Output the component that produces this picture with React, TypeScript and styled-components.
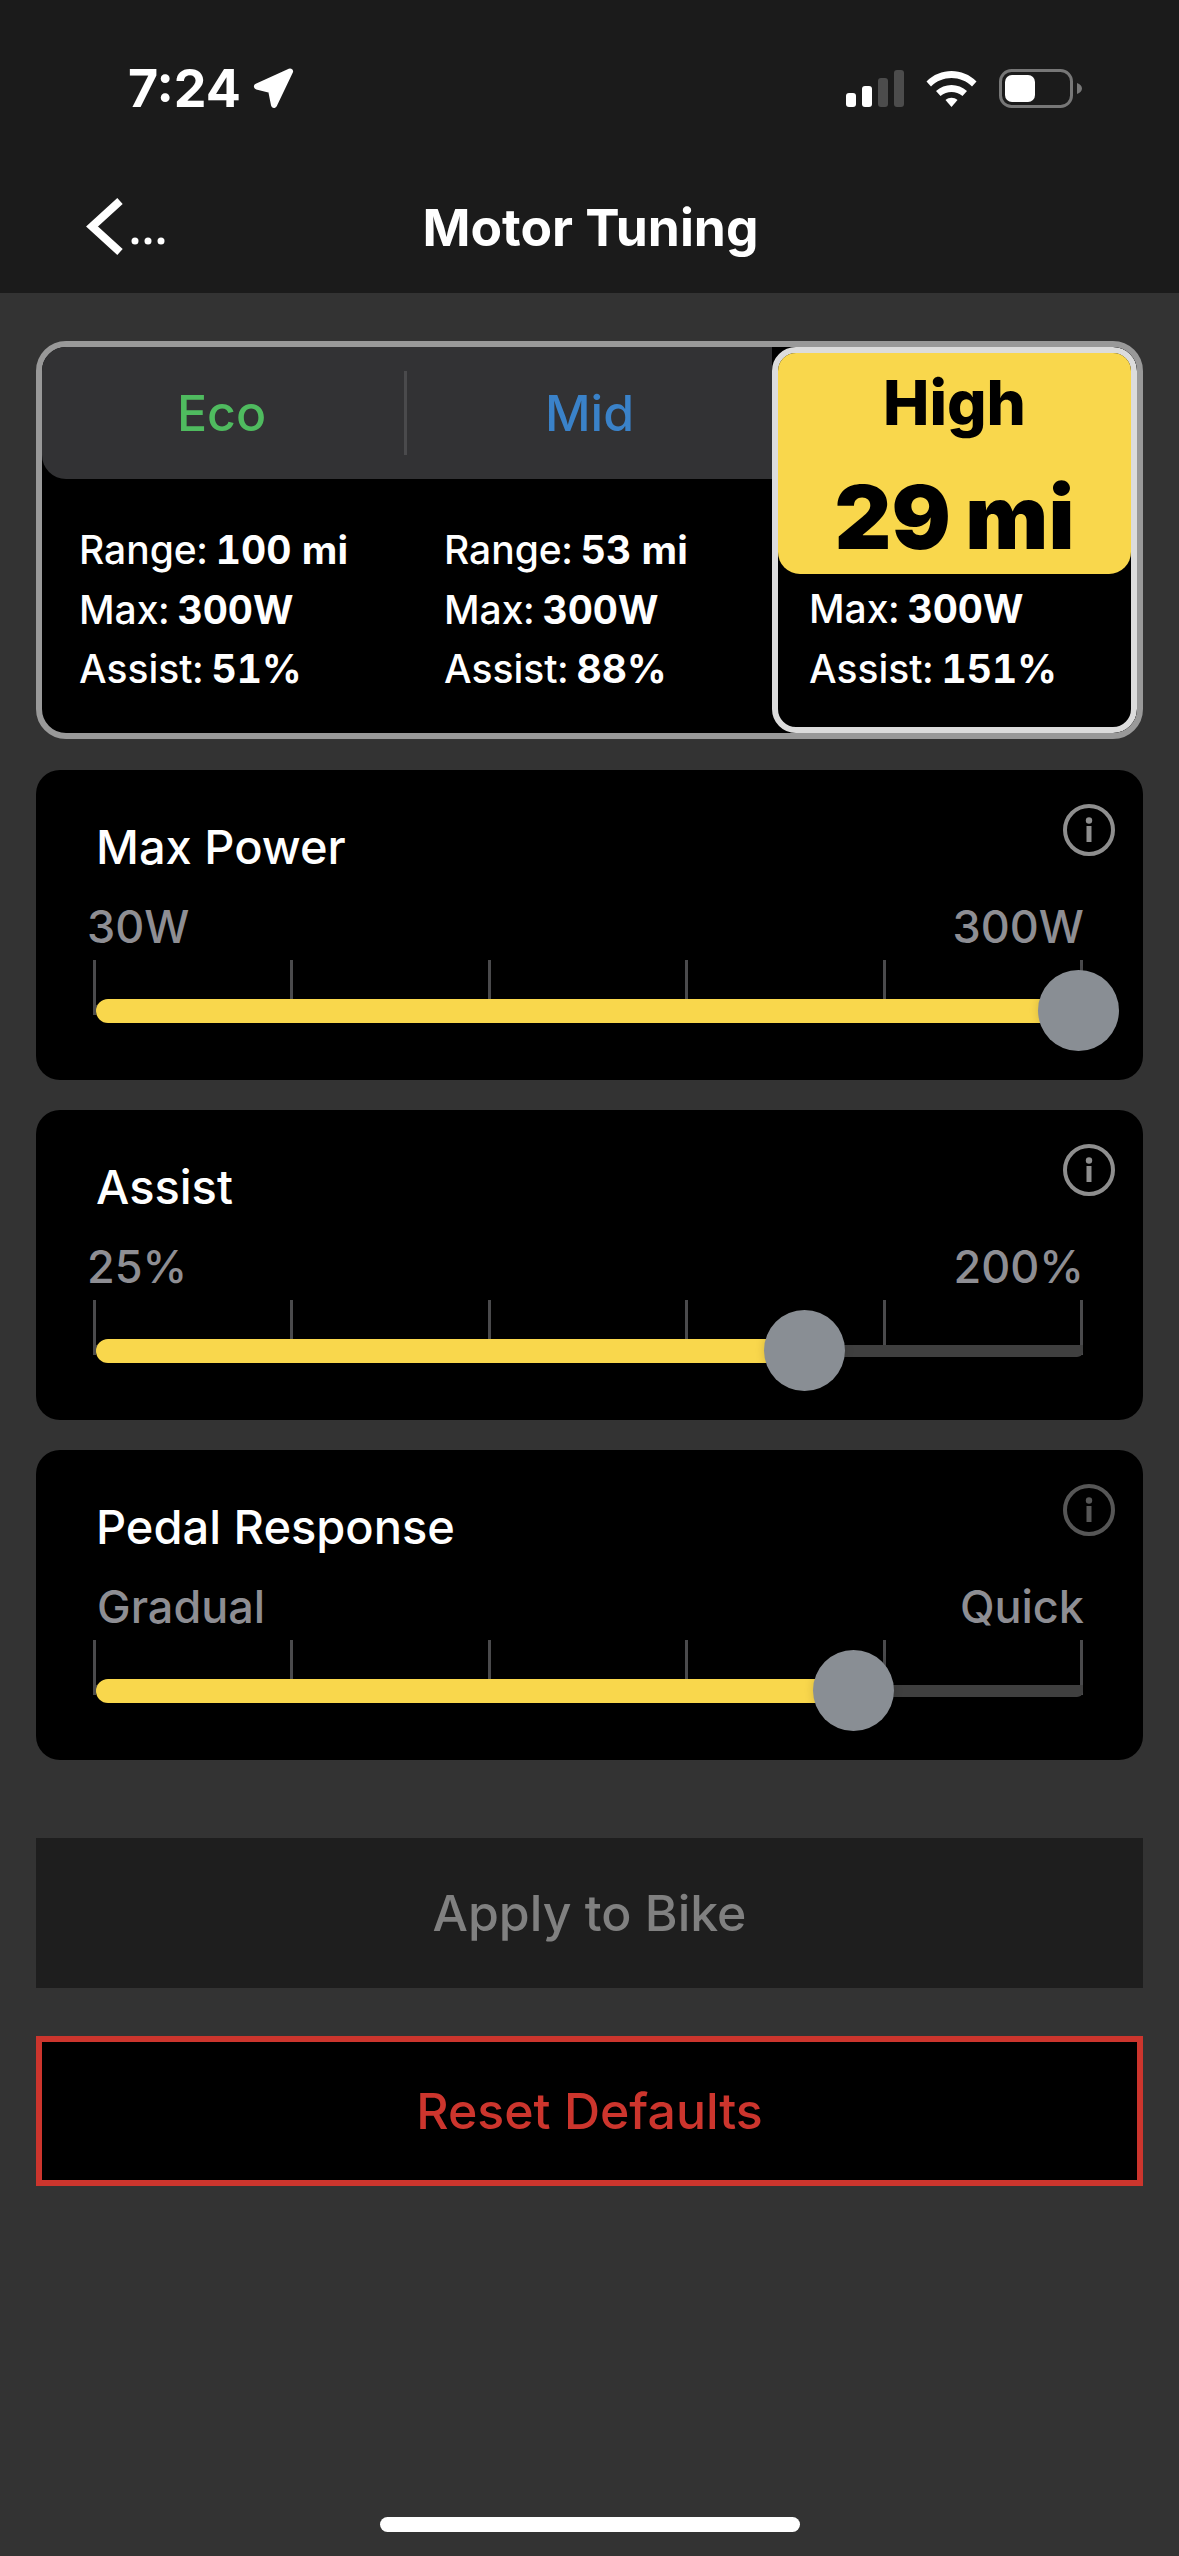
import React from "react";
import styled, { createGlobalStyle } from "styled-components";

const GlobalStyle = createGlobalStyle`
    html, body {
        margin: 0;
        background: #333333;
        font-family: Inter, "Liberation Sans", sans-serif;
    }
    * {
        box-sizing: border-box;
    }
`;

type Mode = {
    name: string;
    color: string;
    range: string;
    max: string;
    assist: string;
    selected?: boolean;
};

type Setting = {
    title: string;
    min: string;
    max: string;
    value: number;
    words?: boolean;
    dimInfo?: boolean;
};

const modes: Mode[] = [
    { name: "Eco", color: "#4fbb5f", range: "100 mi", max: "300W", assist: "51%" },
    { name: "Mid", color: "#3a82c9", range: "53 mi", max: "300W", assist: "88%" },
    { name: "High", color: "#000", range: "29 mi", max: "300W", assist: "151%", selected: true },
];

const settings: Setting[] = [
    { title: "Max Power", min: "30W", max: "300W", value: 99.55 },
    { title: "Assist", min: "25%", max: "200%", value: 71.9 },
    { title: "Pedal Response", min: "Gradual", max: "Quick", value: 76.8, words: true, dimInfo: true },
];

const App: React.FC = () => {
    return (
        <Page>
            <GlobalStyle />
            <TopBar>
                <StatusRow>
                    <Clock>
                        7:24
                        <svg width="41" height="42" viewBox="0 0 41 42">
                            <path
                                d="M37 4.5 L4 19.5 L18 23 L21 38 Z"
                                fill="#fff"
                                stroke="#fff"
                                strokeWidth="6"
                                strokeLinejoin="round"
                            />
                        </svg>
                    </Clock>
                    <StatusIcons>
                        <svg width="58" height="37" viewBox="0 0 58 37">
                            <rect x="0" y="23" width="10" height="14" rx="3" fill="#fff" />
                            <rect x="16" y="16" width="10" height="21" rx="3" fill="#fff" />
                            <rect x="32" y="8" width="10" height="29" rx="3" fill="#4c4c4c" />
                            <rect x="48" y="0" width="10" height="37" rx="3" fill="#4c4c4c" />
                        </svg>
                        <svg width="51" height="37" viewBox="0 0 51 37" fill="#fff">
                            <path d="M0.5 11.5 C14 -2.5 37 -2.5 50.5 11.5 L46 16.5 C35 5 16 5 5 16.5 Z" />
                            <path d="M10 21 C18.5 13 32.5 13 41 21 L36.5 26 C30 20.5 21 20.5 14.5 26 Z" />
                            <path d="M19.5 30 C23 27 28 27 31.5 30 L25.5 37 Z" />
                        </svg>
                        <svg width="83" height="39" viewBox="0 0 83 39">
                            <rect x="1.5" y="1.5" width="71" height="36" rx="11" fill="none" stroke="#777" strokeWidth="3" />
                            <rect x="6" y="6" width="30" height="27" rx="7" fill="#fff" />
                            <path d="M78 14 C81 15 83 17 83 19.5 C83 22 81 24 78 25 Z" fill="#777" />
                        </svg>
                    </StatusIcons>
                </StatusRow>
                <NavRow>
                    <svg width="82" height="62" viewBox="0 0 82 62">
                        <path d="M36 5 L8 30.5 L36 56" fill="none" stroke="#fff" strokeWidth="8" />
                        <circle cx="51" cy="45" r="3.5" fill="#fff" />
                        <circle cx="64" cy="45" r="3.5" fill="#fff" />
                        <circle cx="77" cy="45" r="3.5" fill="#fff" />
                    </svg>
                    <Title>Motor Tuning</Title>
                    <span />
                </NavRow>
            </TopBar>

            <Content>
                <ModePanel>
                    {modes.map((mode, i) => (
                        <ModeColumn key={mode.name} $selected={mode.selected}>
                            {mode.selected ? (
                                <HighBlock>
                                    <HighName>{mode.name}</HighName>
                                    <HighRange>{mode.range}</HighRange>
                                </HighBlock>
                            ) : (
                                <ModeTab $first={i === 0} $color={mode.color}>
                                    {mode.name}
                                </ModeTab>
                            )}
                            <Stats $selected={mode.selected}>
                                {!mode.selected && (
                                    <StatLine>
                                        Range: <b>{mode.range}</b>
                                    </StatLine>
                                )}
                                <StatLine>
                                    Max: <b>{mode.max}</b>
                                </StatLine>
                                <StatLine>
                                    Assist: <b>{mode.assist}</b>
                                </StatLine>
                            </Stats>
                        </ModeColumn>
                    ))}
                </ModePanel>

                {settings.map((s) => (
                    <SettingCard key={s.title}>
                        <InfoIcon width="52" height="52" viewBox="0 0 52 52" $dim={s.dimInfo}>
                            <circle cx="26" cy="26" r="24" fill="none" stroke="currentColor" strokeWidth="4" />
                            <circle cx="26" cy="16.5" r="3.2" fill="currentColor" />
                            <rect x="23.5" y="22" width="5" height="16" fill="currentColor" />
                        </InfoIcon>
                        <SettingTitle>{s.title}</SettingTitle>
                        <Limits $words={s.words}>
                            <span>{s.min}</span>
                            <span>{s.max}</span>
                        </Limits>
                        <Slider>
                            <Ticks>
                                {[0, 1, 2, 3, 4, 5].map((t) => (
                                    <Tick key={t} />
                                ))}
                            </Ticks>
                            <Rail />
                            <Fill style={{ width: `${s.value}%` }} />
                            <Thumb style={{ left: `${s.value}%` }} />
                        </Slider>
                    </SettingCard>
                ))}

                <ApplyButton>Apply to Bike</ApplyButton>
                <ResetButton>Reset Defaults</ResetButton>
            </Content>

            <HomeBar />
        </Page>
    );
};

export default App;

const Page = styled.div`
    background: #333333;
    display: flex;
    flex-direction: column;
    height: 2556px;
    overflow: hidden;
    width: 1179px;
`;

const TopBar = styled.header`
    background: #1b1b1b;
    flex-shrink: 0;
    height: 293px;
`;

const StatusRow = styled.div`
    align-items: center;
    display: flex;
    height: 160px;
    justify-content: space-between;
    padding: 16px 97px 0 128px;
`;

const Clock = styled.div`
    align-items: center;
    color: #fff;
    column-gap: 12px;
    display: flex;
    font-size: 52px;
    font-weight: 700;
`;

const StatusIcons = styled.div`
    align-items: center;
    column-gap: 22px;
    display: flex;
`;

const NavRow = styled.div`
    align-items: center;
    display: grid;
    grid-template-columns: 1fr auto 1fr;
    height: 133px;
    padding: 0 82px 0 84px;
`;

const Title = styled.h1`
    color: #fff;
    font-size: 51.5px;
    font-weight: 700;
    margin: 0;
`;

const Content = styled.main`
    display: flex;
    flex-direction: column;
    padding: 48px 36px 0;
    row-gap: 30px;
`;

const ModePanel = styled.section`
    background: #000;
    border: 6px solid #999999;
    border-radius: 30px;
    display: grid;
    grid-template-columns: repeat(3, 1fr);
    height: 398px;
    margin-bottom: 1px;
    overflow: hidden;
`;

const ModeColumn = styled.div<{ $selected?: boolean }>`
    display: flex;
    flex-direction: column;
    ${(p) =>
        p.$selected &&
        `
        border: 6px solid #dcdcdc;
        border-radius: 24px;
        overflow: hidden;
    `}
`;

const ModeTab = styled.div<{ $first?: boolean; $color: string }>`
    align-items: center;
    background: #323234;
    border-bottom-left-radius: ${(p) => (p.$first ? "24px" : "0")};
    color: ${(p) => p.$color};
    display: flex;
    font-size: 50px;
    font-weight: 500;
    height: 132px;
    justify-content: center;
    padding-right: ${(p) => (p.$first ? "6px" : "0")};
    position: relative;

    ${(p) =>
        p.$first &&
        `
        &::after {
            background: #4a4a4c;
            content: "";
            height: 84px;
            position: absolute;
            right: 0;
            top: 24px;
            width: 3px;
        }
    `}
`;

const HighBlock = styled.div`
    align-items: center;
    background: #f9d74c;
    border-radius: 0 0 22px 22px;
    display: flex;
    flex-direction: column;
    height: 221px;
    padding-top: 14px;
`;

const HighName = styled.div`
    color: #000;
    font-size: 62px;
    font-weight: 800;
    line-height: 72px;
`;

const HighRange = styled.div`
    color: #000;
    font-size: 88px;
    font-weight: 900;
    line-height: 104px;
    margin-top: 26px;
    word-spacing: -3px;
`;

const Stats = styled.div<{ $selected?: boolean }>`
    padding: ${(p) => (p.$selected ? "5px 0 0 31px" : "41px 0 0 37px")};
`;

const StatLine = styled.div`
    color: #fff;
    font-size: 39px;
    font-variant-numeric: tabular-nums;
    font-weight: 500;
    line-height: 59.5px;
    white-space: nowrap;
    word-spacing: -2px;

    b {
        font-weight: 700;
        word-spacing: 0;
    }
`;

const SettingCard = styled.section`
    background: #000;
    border-radius: 24px;
    height: 310px;
    padding-top: 49px;
    position: relative;
`;

const InfoIcon = styled.svg<{ $dim?: boolean }>`
    color: ${(p) => (p.$dim ? "#565656" : "#8e8e8e")};
    position: absolute;
    right: 28px;
    top: 34px;
`;

const SettingTitle = styled.h2`
    color: #fff;
    font-size: 47px;
    font-weight: 500;
    line-height: 56px;
    margin: 0;
    padding-left: 60px;
`;

const Limits = styled.div<{ $words?: boolean }>`
    color: #8e8e93;
    display: flex;
    font-size: 45px;
    font-weight: ${(p) => (p.$words ? 500 : 450)};
    justify-content: space-between;
    line-height: 54px;
    margin-top: 25px;
    padding: 0 59px 0 ${(p) => (p.$words ? "61px" : "51px")};
`;

const Slider = styled.div`
    margin: 6px 60px 0 57px;
    position: relative;
`;

const Ticks = styled.div`
    display: flex;
    justify-content: space-between;
`;

const Tick = styled.div`
    background: #4a4a4c;
    height: 55px;
    width: 3px;
`;

const Rail = styled.div`
    background: #3f3f3f;
    border-radius: 0 0 6px 6px;
    height: 12px;
    left: 3px;
    position: absolute;
    right: 0;
    top: 45px;
`;

const Fill = styled.div`
    background: #f9d74c;
    border-radius: 12px 0 0 12px;
    height: 24px;
    left: 3px;
    position: absolute;
    top: 39px;
`;

const Thumb = styled.div`
    background: #898e94;
    border-radius: 50%;
    box-shadow: 0 0 10px rgba(0, 0, 0, 0.15);
    height: 81px;
    margin-left: -40.5px;
    position: absolute;
    top: 10px;
    width: 81px;
`;

const ApplyButton = styled.button`
    background: #1e1e1e;
    border: none;
    color: #808080;
    font-family: inherit;
    font-size: 50px;
    font-weight: 500;
    height: 150px;
    margin-top: 48px;
`;

const ResetButton = styled.button`
    background: #000;
    border: 6px solid #cc352d;
    color: #cc352d;
    font-family: inherit;
    font-size: 50px;
    font-weight: 500;
    height: 150px;
    margin-top: 18px;
`;

const HomeBar = styled.div`
    background: #fff;
    border-radius: 8px;
    flex-shrink: 0;
    height: 15px;
    margin: auto auto 24px;
    width: 420px;
`;
